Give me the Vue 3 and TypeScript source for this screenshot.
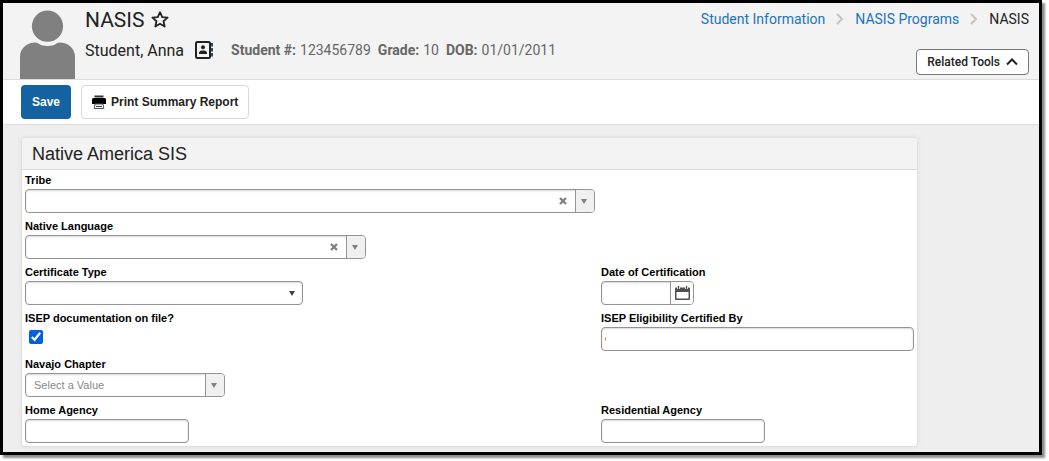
<script setup lang="ts">
import { ref } from 'vue'

interface Fact {
  label: string
  value: string
}

const facts: Fact[] = [
  { label: 'Student #:', value: '123456789' },
  { label: 'Grade:', value: '10' },
  { label: 'DOB:', value: '01/01/2011' },
]

const tribe = ref('')
const language = ref('')
const certificateType = ref('')
const certificationDate = ref('')
const onFile = ref(true)
const certifiedBy = ref('')
const chapter = ref('')
const homeAgency = ref('')
const residentialAgency = ref('')
</script>

<template>
  <div class="frame">
    <header class="header">
      <svg class="avatar" viewBox="0 0 56 69" aria-hidden="true">
        <circle cx="27.5" cy="16.2" r="15.600" />
        <path d="M0 69V47C0 38 7 32.500 15.500 32.500c3 0 4 3.500 12 3.500s9-3.500 12-3.500C48 32.500 55 38 55 47v22z" />
      </svg>
      <div class="identity">
        <div class="title-row">
          <h1>NASIS</h1>
          <button class="plain" type="button" aria-label="Add to favorites">
            <svg width="18" height="18" viewBox="0 0 18 18" aria-hidden="true">
              <path d="M9 1.200l2.200 4.900 5.400.5-4.100 3.600 1.200 5.300L9 12.800l-4.700 2.700 1.200-5.300-4.100-3.600 5.400-.5z" fill="none" stroke="#222" stroke-width="1.800" stroke-linejoin="round" />
            </svg>
          </button>
        </div>
        <div class="student-row">
          <span class="student">Student, Anna</span>
          <button class="plain" type="button" aria-label="Contact card">
            <svg width="19" height="18" viewBox="0 0 19 18" aria-hidden="true">
              <rect x="1" y="1" width="14" height="16" rx="1.500" fill="none" stroke="#222" stroke-width="2" />
              <circle cx="8" cy="6.300" r="2" fill="#222" />
              <path d="M4 13v-1.200C4 10 6 9.500 8 9.500s4 .5 4 2.300V13z" fill="#222" />
              <path d="M16 2h2v3.500h-2zM16 7h2v3.500h-2zM16 12h2v3.500h-2z" fill="#2b4a66" />
            </svg>
          </button>
          <dl class="facts">
            <div v-for="fact in facts" :key="fact.label">
              <dt>{{ fact.label }}</dt>
              <dd>{{ fact.value }}</dd>
            </div>
          </dl>
        </div>
      </div>
      <div class="header-end">
        <nav class="crumbs" aria-label="Breadcrumb">
          <a href="#">Student Information</a>
          <svg width="8" height="12" viewBox="0 0 8 12" aria-hidden="true"><path d="M1 1l5 5-5 5" /></svg>
          <a href="#">NASIS Programs</a>
          <svg width="8" height="12" viewBox="0 0 8 12" aria-hidden="true"><path d="M1 1l5 5-5 5" /></svg>
          <span>NASIS</span>
        </nav>
        <button class="related" type="button">
          Related Tools
          <svg width="12" height="8" viewBox="0 0 12 8" aria-hidden="true"><path d="M1 6.500l5-5 5 5" fill="none" stroke="#222" stroke-width="2" /></svg>
        </button>
      </div>
    </header>

    <div class="toolbar">
      <button class="save" type="button">Save</button>
      <button class="print" type="button">
        <svg width="14" height="14" viewBox="0 0 14 14" aria-hidden="true">
          <path d="M2.500.5h9v2h-9z" fill="#333" />
          <path d="M1.500 3h11A1.500 1.500 0 0 1 14 4.500V9H0V4.500A1.500 1.500 0 0 1 1.500 3z" />
          <path d="M3 9h8l.8 4.500H2.200z" fill="#f4f4f4" stroke="#555" stroke-width="1" />
          <path d="M4 11.500h6" stroke="#444" />
        </svg>
        Print Summary Report
      </button>
    </div>

    <main>
      <section class="card">
        <h2>Native America SIS</h2>
        <form class="grid" @submit.prevent>
          <div class="field wide">
            <label for="tribe">Tribe</label>
            <div class="box tribe">
              <input id="tribe" v-model="tribe" type="text" role="combobox" aria-expanded="false" />
              <button class="clear" type="button" aria-label="Clear tribe" @click="tribe = ''">
                <svg width="8" height="8" viewBox="0 0 8 8"><path d="M1 1l6 6M7 1L1 7" /></svg>
              </button>
              <button class="drop" type="button" aria-label="Open tribe list">
                <svg width="6" height="5" viewBox="0 0 6 5"><path d="M0 0h6L3 5z" /></svg>
              </button>
            </div>
          </div>
          <div class="field wide">
            <label for="language">Native Language</label>
            <div class="box language">
              <input id="language" v-model="language" type="text" role="combobox" aria-expanded="false" />
              <button class="clear" type="button" aria-label="Clear language" @click="language = ''">
                <svg width="8" height="8" viewBox="0 0 8 8"><path d="M1 1l6 6M7 1L1 7" /></svg>
              </button>
              <button class="drop" type="button" aria-label="Open language list">
                <svg width="6" height="5" viewBox="0 0 6 5"><path d="M0 0h6L3 5z" /></svg>
              </button>
            </div>
          </div>
          <div class="field">
            <label for="certificate">Certificate Type</label>
            <div class="box certificate">
              <select id="certificate" v-model="certificateType">
                <option value=""></option>
              </select>
              <svg class="caret" width="6" height="5" viewBox="0 0 6 5" aria-hidden="true"><path d="M0 0h6L3 5z" /></svg>
            </div>
          </div>
          <div class="field">
            <label for="date">Date of Certification</label>
            <div class="box date">
              <input id="date" v-model="certificationDate" type="text" />
              <button class="calendar" type="button" aria-label="Choose date">
                <svg width="15" height="14" viewBox="0 0 15 14">
                  <path d="M1 1.500h13a1 1 0 0 1 1 1V13a1 1 0 0 1-1 1H1a1 1 0 0 1-1-1V2.500a1 1 0 0 1 1-1zM1.500 6v6.500h12V6z" fill="#505050" fill-rule="evenodd" />
                  <path d="M3.500 0v3M11.500 0v3" stroke="#fff" stroke-width="3" />
                  <path d="M3.500 0v3M11.500 0v3" stroke="#505050" stroke-width="1.400" />
                </svg>
              </button>
            </div>
          </div>
          <div class="field">
            <label for="on-file">ISEP documentation on file?</label>
            <div class="check"><input id="on-file" v-model="onFile" type="checkbox" /></div>
          </div>
          <div class="field">
            <label for="certified-by">ISEP Eligibility Certified By</label>
            <div class="box marked"><input id="certified-by" v-model="certifiedBy" type="text" /></div>
          </div>
          <div class="field wide">
            <label for="chapter">Navajo Chapter</label>
            <div class="box chapter">
              <input id="chapter" v-model="chapter" type="text" role="combobox" aria-expanded="false" placeholder="Select a Value" />
              <button class="drop" type="button" aria-label="Open chapter list">
                <svg width="6" height="5" viewBox="0 0 6 5"><path d="M0 0h6L3 5z" /></svg>
              </button>
            </div>
          </div>
          <div class="field">
            <label for="home">Home Agency</label>
            <div class="box agency"><input id="home" v-model="homeAgency" type="text" /></div>
          </div>
          <div class="field">
            <label for="residential">Residential Agency</label>
            <div class="box agency"><input id="residential" v-model="residentialAgency" type="text" /></div>
          </div>
        </form>
      </section>
    </main>
  </div>
</template>

<style>
body {
  background: #fff;
}
</style>

<style scoped>
* {
  box-sizing: border-box;
}
.frame {
  margin: 0 7px 7px 0;
  border: 3px solid #000;
  background: #eee;
  box-shadow: 3px 3px 2px rgba(0, 0, 0, 0.45);
  font-family: Roboto, "Liberation Sans", sans-serif;
  color: #222;
}
button,
input,
select {
  margin: 0;
  font: inherit;
  color: inherit;
}
button {
  cursor: pointer;
}
.plain {
  display: flex;
  padding: 0;
  border: 0;
  background: none;
}
.header {
  display: flex;
  padding: 0 10px 0 17px;
  background: #f3f3f3;
  border-bottom: 1px solid #dcdcdc;
}
.avatar {
  flex: none;
  align-self: flex-end;
  width: 56px;
  height: 69px;
  fill: #808080;
}
.identity {
  flex: 1;
  padding: 4px 0 0 9px;
}
.title-row {
  display: flex;
  align-items: center;
  gap: 6px;
  height: 26px;
}
h1 {
  margin: 0;
  font-size: 21px;
  line-height: 26px;
  font-weight: 400;
}
.student-row {
  display: flex;
  align-items: center;
  height: 34px;
}
.student {
  margin-right: 11px;
  font-size: 16px;
}
.facts {
  display: flex;
  gap: 7px;
  margin: 0 0 0 17px;
  font-size: 14px;
  color: #666;
}
.facts div {
  display: flex;
  gap: 4px;
}
.facts dt {
  font-weight: 700;
}
.facts dd {
  margin: 0;
}
.header-end {
  display: flex;
  flex-direction: column;
  align-items: flex-end;
  justify-content: space-between;
  padding: 6px 0 4px;
  height: 76px;
}
.crumbs {
  display: flex;
  align-items: center;
  gap: 11px;
  font-size: 14px;
  line-height: 20px;
}
.crumbs a {
  color: #1a73bd;
  text-decoration: none;
}
.crumbs path {
  fill: none;
  stroke: #c4c4c4;
  stroke-width: 2;
}
.related {
  display: flex;
  align-items: center;
  gap: 6px;
  height: 26px;
  padding: 0 10px;
  border: 1px solid #777;
  border-radius: 4px;
  background: #fff;
  font-size: 12px;
  font-weight: 500;
}
.toolbar {
  display: flex;
  gap: 10px;
  padding: 5px 18px;
  background: #fff;
  border-bottom: 1px solid #dcdcdc;
}
.toolbar button {
  height: 34px;
  border-radius: 4px;
  font-family: "Liberation Sans", Arial, sans-serif;
  font-size: 12px;
  font-weight: 700;
}
.save {
  width: 50px;
  padding: 0;
  border: 0;
  background: #1363a2;
  color: #fff;
}
.print {
  display: flex;
  align-items: center;
  gap: 5px;
  padding: 0 10px;
  border: 1px solid #d8d8d8;
  background: #fff;
}
main {
  padding: 12px 18px 5px;
}
.card {
  max-width: 897px;
  border: 1px solid #e0e0e0;
  border-radius: 4px;
  background: #fff;
  box-shadow: 0 0 5px rgba(0, 0, 0, 0.06);
  font-family: "Liberation Sans", Arial, sans-serif;
  overflow: hidden;
}
h2 {
  margin: 0;
  padding: 2px 10px 0;
  border-bottom: 1px solid #dcdcdc;
  background: #f3f3f3;
  font-size: 18px;
  line-height: 29px;
  font-weight: 400;
}
.grid {
  display: grid;
  grid-template-columns: 576px 1fr;
}
.wide {
  grid-column: 1 / -1;
}
.field {
  height: 46px;
  padding: 2px 3px 3px;
}
.field label {
  display: block;
  width: fit-content;
  margin-bottom: 1px;
  font-size: 11px;
  line-height: 16px;
  font-weight: 700;
  color: #000;
}
.box {
  display: flex;
  height: 24px;
  max-width: 100%;
  border: 1px solid #949494;
  border-radius: 4px;
  background: #fff;
  box-shadow: inset 0 1px 2px rgba(0, 0, 0, 0.15);
  overflow: hidden;
}
.box input,
.box select {
  flex: 1;
  min-width: 0;
  padding: 0 8px;
  border: 0;
  background: transparent;
  font-size: 11px;
  appearance: none;
}
.box input::placeholder {
  color: #888;
}
.box button {
  display: flex;
  align-items: center;
  justify-content: center;
  flex: none;
  padding: 0;
  border: 0;
  background: none;
}
.box .clear {
  width: 24px;
}
.clear path {
  stroke: #808080;
  stroke-width: 2.4;
}
.box .drop {
  width: 19px;
  padding-right: 2px;
  border-left: 1px solid #949494;
  background: #f0f0f0;
}
.drop path {
  fill: #808080;
}
.box .calendar {
  width: 23px;
  border-left: 1px solid #949494;
  background: #fff;
}
.tribe {
  width: 570px;
}
.language {
  width: 341px;
}
.certificate {
  align-items: center;
  width: 278px;
  padding-right: 7px;
}
.caret {
  flex: none;
  fill: #444;
}
.date {
  width: 93px;
}
.marked {
  background: linear-gradient(#c79a72, #c79a72) 3px 9px / 1px 4px no-repeat #fff;
}
.chapter {
  width: 200px;
}
.agency {
  width: 164px;
}
.check {
  display: flex;
  padding: 3px 4px;
}
.check input {
  width: 14px;
  height: 14px;
  accent-color: #0060df;
}
</style>
